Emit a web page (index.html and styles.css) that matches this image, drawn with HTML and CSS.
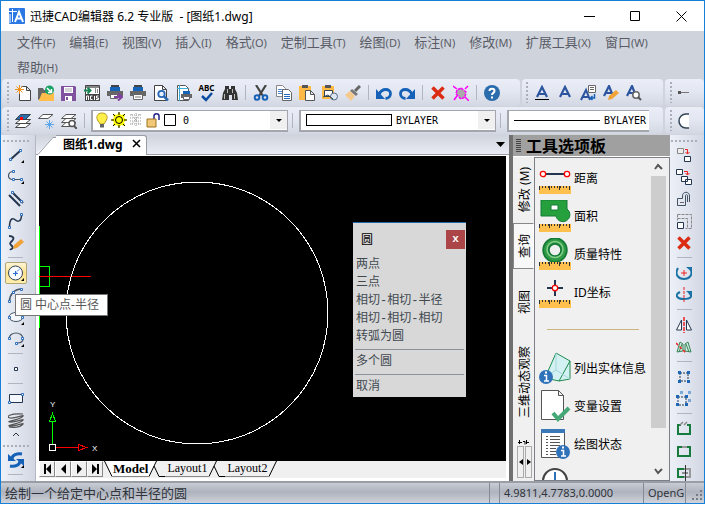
FILE: index.html
```html
<!DOCTYPE html>
<html lang="zh-CN">
<head>
  <meta charset="utf-8">
  <title>迅捷CAD编辑器 6.2 专业版</title>
  <meta name="viewport" content="width=device-width, initial-scale=1.0">
  <link rel="stylesheet" href="styles.css">
</head>
<body>
<div class="app">
  <header class="titlebar">
    <svg class="logo" width="16" height="16" viewBox="0 0 16 16"><rect width="16" height="16" rx="1" fill="#2b78e4"/><path d="M0 3.500h8M3.500 1v13M1 6v9" stroke="#fff" fill="none"/><path d="M6 14l4-10 4 10M7.500 10.500h5" stroke="#fff" stroke-width="2" fill="none"/></svg>
    <h1>迅捷CAD编辑器 6.2 专业版&nbsp; - [图纸1.dwg]</h1>
    <div class="win-btns">
      <button aria-label="最小化"><svg width="11" height="11"><path d="M0 5.500h11" stroke="#000"/></svg></button>
      <button aria-label="最大化"><svg width="11" height="11"><path d="M.5.5h9v9h-9z" stroke="#000" fill="none"/></svg></button>
      <button aria-label="关闭"><svg width="11" height="11"><path d="M.5.5l10 10M10.500.5l-10 10" stroke="#000" fill="none"/></svg></button>
    </div>
  </header>

  <nav class="menu">
    <button>文件<small>(F)</small></button>
    <button>编辑<small>(E)</small></button>
    <button>视图<small>(V)</small></button>
    <button>插入<small>(I)</small></button>
    <button>格式<small>(O)</small></button>
    <button>定制工具<small>(T)</small></button>
    <button>绘图<small>(D)</small></button>
    <button>标注<small>(N)</small></button>
    <button>修改<small>(M)</small></button>
    <button>扩展工具<small>(X)</small></button>
    <button>窗口<small>(W)</small></button>
    <button>帮助<small>(H)</small></button>
  </nav>

  <!-- standard toolbar -->
  <div class="bars">
    <div class="bar bar-main">
      <i class="grip"></i>
      <button aria-label="新建"><svg viewBox="0 0 16 16"><path d="M6.500 1.500h5l4 4v10h-11v-8M11.500 1.500v4h4" fill="#fff" stroke="#444"/><path d="M4.500 0v9M0 4.500h9M1.500 1.500l6 6M7.500 1.500l-6 6" stroke="#f0921e"/></svg></button>
      <button aria-label="打开"><svg viewBox="0 0 16 16"><path d="M0 15V3h5l1 2h4v4" fill="#666"/><path d="M1 15l3-7h12v8H1z" fill="#ffbd4a"/><circle cx="11.500" cy="5" r="4.500" fill="#1ba367"/><path d="M9 3l4 4M13.500 4v3.500H10" stroke="#fff" stroke-width="1.500" fill="none"/></svg></button>
      <button aria-label="保存"><svg viewBox="0 0 16 16"><path d="M0 1h14l1 1v14H0z" fill="#80519f"/><path d="M3 2h9v6H3zM4 11h7v5H4z" fill="#fff"/><path d="M4 4h7M4 6h7" stroke="#aaa"/><path d="M5 12h2v3H5z" fill="#80519f"/></svg></button>
      <button aria-label="导出"><svg viewBox="0 0 16 16"><path d="M1.500 15.500v-15h14v15z" fill="#fff" stroke="#444"/><path d="M2 1h13v2H2z" fill="#888"/><path d="M0 5.500h6M3.500 2.500l3 3-3 3" stroke="#178653" stroke-width="2" fill="none"/><path d="M11.500 3v5M13.500 4v4" stroke="#888"/><path d="M1 9h15v7H1z" fill="#444"/><path d="M2.500 15v-4h2v4M8.500 11h-2v3.500h2M10.500 11v4M14.500 11h-2v2h2v1.500h-2.500" stroke="#fff" fill="none"/></svg></button>
      <button aria-label="输出打印"><svg viewBox="0 0 16 16"><path d="M4 0h8v4H4z" fill="#444"/><path d="M3 2h10v4H3z" fill="#1664b8"/><path d="M0 6h16v5H0z" fill="#666"/><path d="M3.500 9.500h7v4h-7z" fill="#fff" stroke="#666"/><path d="M7 12h7M11 8.500l4 3.500-4 3.500" stroke="#80409f" stroke-width="2" fill="none"/></svg></button>
      <button aria-label="打印"><svg viewBox="0 0 16 16"><path d="M4 0h8v4H4z" fill="#444"/><path d="M3 2h10v4H3z" fill="#1664b8"/><path d="M0 6h16v5H0z" fill="#666"/><path d="M3.500 9.500h9v5h-9z" fill="#fff" stroke="#666"/><path d="M5 12h6" stroke="#777"/></svg></button>
      <button aria-label="打印预览"><svg viewBox="0 0 16 16"><path d="M1.500.5h8l4 4v11h-12zM9.500.5v4h4" fill="#fff" stroke="#444"/><circle cx="8.500" cy="9" r="3.200" fill="#e8f2ff" stroke="#2967b5" stroke-width="1.800"/><path d="M11 11.500l4 4" stroke="#2967b5" stroke-width="2.500"/></svg></button>
      <button aria-label="页面设置"><svg viewBox="0 0 16 16"><path d="M1.500.5h8l3 3v12h-11z" fill="#fff" stroke="#555"/><path d="M3.500 0v16M1 3.500h11" stroke="#3dadd6"/><path d="M7 6h7v3H7z" fill="#1664b8"/><path d="M5 9h11v4H5z" fill="#666"/><path d="M7.500 11.500h6v3h-6z" fill="#fff" stroke="#666"/></svg></button>
      <button class="spell" aria-label="拼写检查"><span class="abc">ABC</span><svg viewBox="0 0 16 10"><path d="M3 4l4 4 6-7" fill="none" stroke="#0c4da2" stroke-width="2.500"/></svg></button>
      <button aria-label="查找"><svg viewBox="0 0 16 16"><path d="M3 1h4v3h2V1h4v3l2 4 1 7h-6v-5H7v5H0l1-7 2-4z" fill="#333"/><path d="M2.500 9v5M12.500 9v5M5.500 4v4M10.500 4v4" stroke="#bbb"/></svg></button>
      <i class="sep"></i>
      <button aria-label="剪切"><svg viewBox="0 0 16 16"><path d="M3 0l7 11M13 0L6 11" stroke="#444" stroke-width="2.200"/><circle cx="4" cy="12.500" r="2.300" fill="none" stroke="#1561b8" stroke-width="2"/><circle cx="12" cy="12.500" r="2.300" fill="none" stroke="#1561b8" stroke-width="2"/></svg></button>
      <button aria-label="复制"><svg viewBox="0 0 16 16"><path d="M.5.5h6l3 3v8h-9z" fill="#fff" stroke="#888"/><path d="M2 4.500h5M2 6.500h5M2 8.500h5" stroke="#4a87ce"/><path d="M6.500 4.500h6l3 3v8h-9z" fill="#fff" stroke="#666"/><path d="M8 9.500h6M8 11.500h6M8 13.500h6" stroke="#2168bd"/></svg></button>
      <button aria-label="粘贴"><svg viewBox="0 0 16 16"><path d="M0 1h12v14H0z" fill="#ffba45"/><path d="M3 0h6v3H3z" fill="#555"/><path d="M6.500 5.500h5l4 4v6h-9zM11.500 5.500v4h4" fill="#fff" stroke="#555"/></svg></button>
      <button aria-label="粘贴为块"><svg viewBox="0 0 16 16"><path d="M0 1h12v13H0z" fill="#ffba45"/><path d="M3 0h6v3H3z" fill="#555"/><path d="M2.500 5.500h8v6h-8z" fill="#fff" stroke="#345"/><circle cx="12" cy="11.500" r="3.500" fill="#dce6f1" stroke="#556b86"/><path d="M1 12l5-2 5 4" fill="none" stroke="#345"/></svg></button>
      <button aria-label="特性匹配"><svg viewBox="0 0 16 16"><path d="M15 1l-5 5" stroke="#666" stroke-width="3"/><path d="M7 4l6 5-2 2-6-5z" fill="#777"/><path d="M5 6l5 5-4 5-6-6z" fill="#f4c98b"/></svg></button>
      <i class="sep"></i>
      <button aria-label="撤消"><svg viewBox="0 0 16 16"><path d="M3 9.500c3-7 11.500-6 11.500-1 0 3-2 5-5 5" fill="none" stroke="#1561b8" stroke-width="2.800"/><path d="M0 4v10h9z" fill="#1561b8"/></svg></button>
      <button aria-label="重做"><svg viewBox="0 0 16 16"><path d="M13 9.500C10 2.500 1.500 3.500 1.500 8.500c0 3 2 5 5 5" fill="none" stroke="#1561b8" stroke-width="2.800"/><path d="M16 4v10H7z" fill="#1561b8"/></svg></button>
      <i class="sep"></i>
      <button aria-label="删除"><svg viewBox="0 0 16 16"><path d="M2.500 2.500l11 11M13.500 2.500l-11 11" stroke="#db2b12" stroke-width="3.500"/></svg></button>
      <button aria-label="清理"><svg viewBox="0 0 16 16"><path d="M8 3l5 4-1 5-4 2-5-5 1-4z" fill="#aaa" stroke="#f0f" stroke-width="1.500" stroke-dasharray="3 1"/><path d="M0 1l4 3M15 1l-3 3M1 15l3-4M12 12l4 4" stroke="#f0f" stroke-width="1.500"/></svg></button>
      <i class="sep"></i>
      <button aria-label="帮助"><svg viewBox="0 0 16 16"><circle cx="8" cy="8" r="8" fill="#2a6cac"/><path d="M5.500 6c0-3 5-3 5 0 0 2-2.500 1.800-2.500 4M8 11.500v2" fill="none" stroke="#fff" stroke-width="2"/></svg></button>
    </div>
    <div class="bar bar-text">
      <i class="grip"></i>
      <button aria-label="多行文字"><svg viewBox="0 0 16 16"><path d="M3 12L8 2l5 10M5 9h6" fill="none" stroke="#2d559f" stroke-width="2.200"/><path d="M1 14.500h14" stroke="#000"/></svg></button>
      <button aria-label="单行文字"><svg viewBox="0 0 16 16"><path d="M3 12L8 2l5 10M5 9h6" fill="none" stroke="#2d559f" stroke-width="2.200"/></svg></button>
      <button aria-label="文字样式"><svg viewBox="0 0 16 16"><path d="M1 15L6 5l4 10M3 12h6" fill="none" stroke="#2d559f" stroke-width="2"/><path d="M8.500.5h7v7h-7z" fill="#fff" stroke="#666"/><path d="M10 2.500h4M10 4.500h4" stroke="#666"/><path d="M14.500 9v4H11M12.500 11l-2 2 2 2" fill="none" stroke="#1561b8" stroke-width="1.500"/></svg></button>
      <button aria-label="编辑文字"><svg viewBox="0 0 16 16"><path d="M1 11L6 1l4 10M3 8h6" fill="none" stroke="#2d559f" stroke-width="2.200"/><path d="M5 15l1-4 7-6 3 3-7 6z" fill="#f1a33a"/></svg></button>
      <button aria-label="查找文字"><svg viewBox="0 0 16 16"><path d="M1 11L6 1l4 10M3 8h6" fill="none" stroke="#2d559f" stroke-width="2.200"/><circle cx="10" cy="10" r="3.200" fill="#fff" stroke="#666" stroke-width="1.500"/><path d="M12 12l3 3" stroke="#555" stroke-width="2"/></svg></button>
    </div>
    <div class="bar bar-end">
      <i class="grip"></i>
      <svg width="11" height="16"><path d="M1 7.500h10" stroke="#777"/><path d="M0 6h3v3H0z" fill="#555"/></svg>
    </div>
  </div>

  <!-- layers and line properties -->
  <div class="bars">
    <div class="bar bar-props">
      <i class="grip"></i>
      <button aria-label="图层"><svg viewBox="0 0 16 16"><path d="M5.500 10.500h10l-5 4H.5z" fill="#fff" stroke="#444"/><path d="M5.500 6.500h10l-5 4H.5z" fill="#fff" stroke="#444"/><path d="M5.500 1.500h10l-5 5H.5z" fill="#2a6cac" stroke="#345"/><path d="M5 4h3v3H5z" fill="#f00"/></svg></button>
      <button aria-label="冻结图层"><svg viewBox="0 0 16 16"><path d="M5 1.500h10l-5 4H.5z" fill="#fff" stroke="#555"/><path d="M11.500 7v9M7 11.500h9M8.500 8.500l6 6M14.500 8.500l-6 6" stroke="#5ba5e8"/></svg></button>
      <button aria-label="图层浏览"><svg viewBox="0 0 16 16"><path d="M5 9.500h10l-5 4H.5z" fill="#fff" stroke="#555"/><path d="M5 5.500h10l-5 4H.5z" fill="#fff" stroke="#555"/><path d="M5 1.500h10l-5 4H.5z" fill="#fff" stroke="#555"/><circle cx="11" cy="10.500" r="3" fill="#fff" stroke="#555" stroke-width="1.500"/><path d="M13 13l3 3" stroke="#555" stroke-width="2"/></svg></button>
      <i class="sep"></i>
      <div class="combo">
        <svg class="opt" viewBox="0 0 16 16"><path d="M8 1c-5 0-6 4-4.500 7l2.500 4h4l2.500-4c1.500-3 .5-7-4.500-7z" fill="#ffef4b" stroke="#b59a25"/><path d="M6 12h4v3.500H6z" fill="#666"/></svg>
        <svg class="opt" viewBox="0 0 16 16"><path d="M8 0l2 3 4-1-1 4 3 2-3 2 1 4-4-1-2 3-2-3-4 1 1-4-3-2 3-2-1-4 4 1z" fill="#ff0"/><path d="M8 0v3M8 13v3M0 8h3M13 8h3M2 2l2 2M12 12l2 2M14 2l-2 2M4 12l-2 2" stroke="#000"/><circle cx="8" cy="8" r="3.500" fill="#ff0" stroke="#000"/></svg>
        <svg class="opt" viewBox="0 0 16 16"><path d="M2 3h12M2 6h12M2 9h12M2 12h12" stroke="#999" stroke-dasharray="1 1"/><path d="M3 2l9 11M12 2L3 13M8 1v14" stroke="#999" stroke-dasharray="1 1"/></svg>
        <svg class="opt" viewBox="0 0 16 16"><path d="M9 7V4c0-3 5-3 5 0v4" fill="none" stroke="#23238a" stroke-width="1.500"/><path d="M2 7h9v8H2z" fill="#f0c877" stroke="#9f7223"/></svg>
        <svg class="opt" viewBox="0 0 16 16"><path d="M2.500 2.500h11v11h-11z" fill="#fff" stroke="#000"/></svg>
        <select aria-label="当前图层"><option>0</option></select>
        <svg class="arrow" viewBox="0 0 17 18"><path d="M6 8h6l-3 3z" fill="#000"/></svg>
      </div>
      <i class="sep"></i>
      <div class="combo combo-color">
        <i class="swatch"></i>
        <select aria-label="颜色"><option>BYLAYER</option></select>
        <svg class="arrow" viewBox="0 0 17 18"><path d="M6 8h6l-3 3z" fill="#000"/></svg>
      </div>
      <i class="sep"></i>
      <div class="combo combo-line">
        <i class="line"></i>
        <select aria-label="线型"><option>BYLAYER</option></select>
      </div>
    </div>
    <div class="bar bar-end">
      <i class="grip"></i>
      <svg width="11" height="16"><path d="M11 1H8a7 7 0 0 0 0 14h3" fill="#fff"/><path d="M11 1H8a7 7 0 0 0 0 14h3" fill="none" stroke="#345" stroke-width="1.500"/></svg>
    </div>
  </div>

  <main class="work">
    <aside class="tools">
      <i class="grip-h"></i>
      <button aria-label="直线"><svg viewBox="0 0 16 16"><path d="M2.500 12.500l10-9" stroke="#24364f" stroke-width="2"/><path class="node" d="M1.500 11.500h2v2h-2zM11.500 2.500h2v2h-2z"/><path d="M16 13v3h-3z"/></svg></button>
      <button aria-label="多段线"><svg viewBox="0 0 16 16"><path d="M5 2.500C-1 3-1 11 5 10.500h8" fill="none" stroke="#456" stroke-width="1.200"/><path class="node" d="M4.500 1.500h2v2h-2zM4.500 9.500h2v2h-2zM12.500 9.500h2v2h-2z"/><path d="M16 12v3h-3z"/></svg></button>
      <button aria-label="多线"><svg viewBox="0 0 16 16"><path d="M4 1l11 11M1 4l11 11" stroke="#24364f" stroke-width="2"/><path class="node" d="M3.500.5h2v2h-2zM12.500 9.500h2v2h-2z"/></svg></button>
      <button aria-label="样条曲线"><svg viewBox="0 0 16 16"><path d="M1.500 14c0-10 4-9 6-7s6 2 6-5" fill="none" stroke="#24364f" stroke-width="1.500"/><path class="node" d="M.5 13.500h2v2h-2zM12.500.5h2v2h-2z"/></svg></button>
      <button aria-label="徒手画"><svg viewBox="0 0 16 16"><path d="M1 1c4 0 6 2 3 5s-2 3 0 5-1 4-2 3" fill="none" stroke="#24364f" stroke-width="1.800"/><path d="M5 14l1-4 7-6 3 3-7 6z" fill="#f1a33a"/></svg></button>
      <i class="sep-h"></i>
      <button class="active" aria-label="圆 中心点-半径"><svg viewBox="0 0 16 16"><circle cx="7.500" cy="8" r="7" fill="#f8fbff" stroke="#345"/><path d="M7.500 8l5-5" stroke="#2a6cd0" stroke-dasharray="2 1"/><path d="M5 8.500h5M7.500 6v5" stroke="#2a6cd0"/><path d="M16 13v3h-3z"/></svg></button>
      <button aria-label="圆弧"><svg viewBox="0 0 16 16"><path d="M1.500 14C1.500 8 6 2 13.500 2" fill="none" stroke="#456" stroke-width="1.500"/><path class="node" d="M.5 13.500h2v2h-2zM4.500 4.500h2v2h-2zM12.500 1.500h2v2h-2z"/></svg></button>
      <button aria-label="椭圆"><svg viewBox="0 0 16 16"><ellipse cx="8" cy="8" rx="7" ry="4.500" fill="#f4f8fe" stroke="#456"/><path class="node" d="M.5 7.500h2v2h-2zM13.500 7.500h2v2h-2z"/><path d="M16 13v3h-3z"/></svg></button>
      <button aria-label="椭圆弧"><svg viewBox="0 0 16 16"><path d="M1 8c0-8 14-8 14 0 0 3-3 4-6 4" fill="none" stroke="#456" stroke-width="1.200"/><path class="node" d="M.5 6.500h2v2h-2zM7.500 11.500h2v2h-2zM13.500 6.500h2v2h-2z"/><path d="M16 13v3h-3z"/></svg></button>
      <i class="sep-h"></i>
      <button aria-label="点"><svg viewBox="0 0 16 16"><path d="M6.500 6.500h3v3h-3z" fill="#fff" stroke="#24364f"/></svg></button>
      <i class="sep-h"></i>
      <button aria-label="矩形"><svg viewBox="0 0 16 16"><path d="M1.500 3.500h13v8h-13z" fill="#f4f8fe" stroke="#24364f"/><path class="node" d="M.5 10.500h2v2h-2zM13.500 2.500h2v2h-2z"/></svg></button>
      <button aria-label="螺旋"><svg viewBox="0 0 16 16"><path d="M15 1C2 0-3 4 2 5s17-5 12-1S-3 8 2 9s17-5 12-1-17 4-12 5 17-5 12-1c-2 2-8 3-13 2" fill="none" stroke="#555" stroke-width="1.200"/></svg></button>
      <i class="more"><svg width="8" height="5"><path d="M1 4l3-3 3 3" fill="none" stroke="#333"/></svg></i>
      <i class="grip-h"></i>
      <button aria-label="重生成"><svg viewBox="0 0 16 16"><path d="M14 2C9 1 4 3 4 7M2 14c5 1 10-1 10-5" fill="none" stroke="#1561b8" stroke-width="3"/><path d="M0 2v7h8zM16 14V7H8z" fill="#1561b8"/><path d="M16 13v3h-3z"/></svg></button>
      <i class="sep-h"></i>
    </aside>
    <div class="tooltip">圆 中心点-半径</div>

    <section class="doc">
      <div class="doc-tabs">
        <svg class="slope" width="20" height="18"><path d="M0 18L16 1h4v17z" fill="#fff"/><path d="M0 17.500h2L17 .5h3" fill="none" stroke="#999da6"/></svg>
        <div class="doc-tab">图纸1.dwg <button aria-label="关闭图纸"><svg width="9" height="9"><path d="M1 1l7 7M8 1L1 8" stroke="#000" stroke-width="1.500"/></svg></button></div>
        <button class="doc-list" aria-label="图纸列表"><svg width="9" height="5"><path d="M0 0h9L4.500 5z"/></svg></button>
      </div>
      <div class="canvas">
        <svg width="467" height="305" shape-rendering="crispEdges">
          <path d="M.5 70v102M0 110.500h10.500v20H0" stroke="#0f0" fill="none"/>
          <path d="M0 120.500h52" stroke="#f00"/>
          <circle cx="158" cy="157" r="131" fill="none" stroke="#fff"/>
          <path d="M13.500 288v-23M10.500 265.500h6l-3-8z" stroke="#0f0" fill="none"/>
          <path d="M17 291.500h22M39.500 288.500v6l8-3z" stroke="#f00" fill="none"/>
          <path d="M10.500 288.500h6v6h-6z" stroke="#fff" fill="none"/>
          <text x="11" y="251">Y</text>
          <text x="53" y="295">X</text>
        </svg>
        <div class="popup">
          <div class="popup-head">圆<button aria-label="关闭">x</button></div>
          <button>两点</button>
          <button>三点</button>
          <button>相切-相切-半径</button>
          <button>相切-相切-相切</button>
          <button>转弧为圆</button>
          <hr>
          <button>多个圆</button>
          <hr>
          <button>取消</button>
        </div>
      </div>
      <div class="layouts">
        <button class="nav" aria-label="首页"><svg width="9" height="10"><path d="M1 0h2v10H1zM8 0v10L3 5z"/></svg></button>
        <button class="nav" aria-label="上一页"><svg width="9" height="10"><path d="M7 0v10L2 5z"/></svg></button>
        <button class="nav" aria-label="下一页"><svg width="9" height="10"><path d="M2 0v10l5-5z"/></svg></button>
        <button class="nav" aria-label="末页"><svg width="9" height="10"><path d="M1 0v10l5-5zM6 0h2v10H6z"/></svg></button>
        <svg class="cut" width="9" height="16"><path d="M1 0h8v16z" fill="#fff"/><path d="M1.500 0L9 15.500" stroke="#000"/></svg>
        <button class="layout current">Model</button>
        <svg class="cut" width="16" height="16"><path d="M0 0h8L0 16z" fill="#fff"/><path d="M0 15.500L7.500 0M5 5l5 10.500h6" fill="none" stroke="#000"/></svg>
        <button class="layout">Layout1</button>
        <svg class="cut" width="16" height="16"><path d="M0 15.500L7.500 0M5 5l5 10.500h6" fill="none" stroke="#000"/></svg>
        <button class="layout">Layout2</button>
        <svg class="cut" width="8" height="16"><path d="M0 15.500L7.500 0" stroke="#000"/></svg>
      </div>
    </section>

    <aside class="palette">
      <h2><i class="grip-dark"></i>工具选项板</h2>
      <div class="palette-body">
        <div class="vtabs">
          <button class="vtab"><span>修改 (M)</span></button>
          <button class="vtab on"><span>查询</span></button>
          <button class="vtab"><span>视图</span></button>
          <button class="vtab long"><span>三维动态观察</span></button>
          <svg class="rest" width="11" height="5"><path d="M1.500 0v4M0 2.500h4M5 1.500h2v3M8.500 0v4M8 2.500h3" fill="none" stroke="#000"/></svg>
          <div class="vnav">
            <button aria-label="向左"><svg width="4" height="6"><path d="M4 0v6L0 3z"/></svg></button>
            <button aria-label="向右"><svg width="4" height="6"><path d="M0 0v6l4-3z"/></svg></button>
          </div>
        </div>
        <div class="list">
          <button class="item"><svg viewBox="0 0 32 32"><path d="M4 12h24" stroke="#24364f" stroke-width="2"/><circle cx="4" cy="12" r="2.700" fill="#fff" stroke="#f00" stroke-width="1.300"/><circle cx="28" cy="12" r="2.700" fill="#fff" stroke="#f00" stroke-width="1.300"/><path class="rule" d="M0 24h32v8H0z"/><path class="ticks" d="M0 26h32"/><path class="ticks-l" d="M0 25h32"/></svg>距离</button>
          <button class="item"><svg viewBox="0 0 32 32"><path d="M2 0h26v9a7 7 0 1 1-11 7H2z" fill="#26a03d" stroke="#147a36"/><path d="M12 5h7v5h-7z" fill="#fff" stroke="#147a36"/><path class="rule" d="M0 24h32v8H0z"/><path class="ticks" d="M0 26h32"/><path class="ticks-l" d="M0 25h32"/></svg>面积</button>
          <button class="item"><svg viewBox="0 0 32 32"><circle cx="16" cy="12" r="9" fill="none" stroke="#147a36" stroke-width="7.500"/><circle cx="16" cy="12" r="9" fill="none" stroke="#2f9b47" stroke-width="4"/><circle cx="16" cy="11.500" r="8" fill="none" stroke="#86cf8a" stroke-width="1.500"/><path class="rule" d="M0 24h32v8H0z"/><path class="ticks" d="M0 26h32"/><path class="ticks-l" d="M0 25h32"/></svg>质量特性</button>
          <button class="item"><svg viewBox="0 0 32 32"><path d="M16 4v16M8 12h16" stroke="#24364f" stroke-width="2"/><circle cx="16" cy="12" r="2.700" fill="#fff" stroke="#f00" stroke-width="1.300"/><path class="rule" d="M0 24h32v8H0z"/><path class="ticks" d="M0 26h32"/><path class="ticks-l" d="M0 25h32"/></svg>ID坐标</button>
          <hr>
          <button class="item"><svg viewBox="0 0 32 32"><path d="M17 1l14 8v18l-11 2L6 26z" fill="#d3f0f2" stroke="#1c8b4c" stroke-linejoin="round"/><path d="M31 9L20 29" stroke="#1c8b4c"/><path d="M17 1v17L6 26M17 18l14 9" fill="none" stroke="#a5d6d8"/><circle cx="7" cy="25" r="7" fill="#2f72b9"/><path d="M5 23.500h2.500V29M5 29h5" fill="none" stroke="#fff" stroke-width="1.500"/><path d="M6 19.500h2v2H6z" fill="#fff"/></svg>列出实体信息</button>
          <button class="item"><svg viewBox="0 0 32 32"><path d="M2.500.5h17l5 5v24h-22zM19.500.5v5h5" fill="#fff" stroke="#555"/><path d="M14 23l5 6L30 18" fill="none" stroke="#44a877" stroke-width="4"/></svg>变量设置</button>
          <button class="item"><svg viewBox="0 0 32 32"><path d="M2.500 1.500h23v28h-23z" fill="#fff" stroke="#555"/><path d="M2 1h24v4H2z" fill="#3a78b8"/><path d="M7 8.500h2M11 8.500h10M7 11.500h2M11 11.500h10M7 14.500h2M11 14.500h10M7 17.500h2M11 17.500h10M7 20.500h2M11 20.500h6M7 23.500h2M11 23.500h6M7 26.500h2M11 26.500h6" stroke="#555"/><circle cx="24" cy="24" r="7" fill="#2f72b9"/><path d="M22 22.500h2.500V28M22 28h5" fill="none" stroke="#fff" stroke-width="1.500"/><path d="M23 18.500h2v2h-2z" fill="#fff"/></svg>绘图状态</button>
          <button class="item"><svg viewBox="0 0 32 32"><circle cx="16" cy="15" r="12" fill="#fff" stroke="#444" stroke-width="2"/><path d="M16 6v9" stroke="#2f72b9" stroke-width="2"/></svg></button>
        </div>
        <div class="scroll">
          <svg width="15" height="18"><path d="M4 11l3-4 4 4" fill="none" stroke="#555" stroke-width="2"/></svg>
          <i class="thumb"></i>
          <svg width="15" height="18"><path d="M4 7l3 4 4-4" fill="none" stroke="#555" stroke-width="2"/></svg>
        </div>
      </div>
    </aside>

    <aside class="tools tools-right">
      <i class="grip-h"></i>
      <button aria-label="复制对象"><svg viewBox="0 0 16 16"><path d="M1.500 1.500h6v5h-6z" fill="#eee" stroke="#888"/><path d="M8.500 9.500h6v5h-6z" fill="#fff" stroke="#24364f"/><path d="M9 2.500h2.500V7M9.500 5l2 2 2-2" fill="none" stroke="#e22"/></svg></button>
      <button aria-label="多重复制"><svg viewBox="0 0 16 16"><path d="M.5.5h6v5h-6zM5.500 7.500h6v5h-6zM9.500 10.500h6v5h-6z" fill="#fff" stroke="#24364f"/><path d="M8 2.500h3.500V6M9.500 4l2 2 2-2" fill="none" stroke="#e22"/></svg></button>
      <button aria-label="偏移"><svg viewBox="0 0 16 16"><path d="M1.500 14.500v-7h5V5c0-5 7-5 7 0v6M1.500 14.500h8V5c0-2 2-2 2 0v6" fill="none" stroke="#445266"/><path d="M4 11.500h4" stroke="#667"/></svg></button>
      <button aria-label="阵列"><svg viewBox="0 0 16 16"><path d="M1.500 1.500h14v14h-6M1.500 1.500v6M1.500 5.500h10v10" fill="none" stroke="#888" stroke-dasharray="3 1"/><path d="M1.500 9.500h6v6h-6z" fill="#fff" stroke="#24364f"/></svg></button>
      <button aria-label="删除对象"><svg viewBox="0 0 16 16"><path d="M2.500 2.500l11 11M13.500 2.500l-11 11" stroke="#db2b12" stroke-width="3.500"/></svg></button>
      <i class="sep-h"></i>
      <button aria-label="旋转"><svg viewBox="0 0 16 16"><path d="M2 3c-4 7 1 11 6 11s10-4 6-11" fill="none" stroke="#1b72a5" stroke-width="2"/><path d="M10 2h6v5z" fill="#1b72a5"/><path d="M8 5v6M5 8h6" stroke="#e22"/></svg></button>
      <button aria-label="三维旋转"><svg viewBox="0 0 16 16"><path d="M4 5C-2 8 1 12 8 12s9-3 5-6" fill="none" stroke="#1b72a5" stroke-width="2"/><path d="M10 4h6v5z" fill="#1b72a5"/><path d="M8 0v16" stroke="#e22" stroke-dasharray="3 1"/></svg></button>
      <i class="sep-h"></i>
      <button aria-label="镜像"><svg viewBox="0 0 16 16"><path d="M5.500 3v10h-5zM10.500 3v10h5z" fill="#fff" stroke="#24364f"/><path d="M8 0v16" stroke="#e22" stroke-width="1.500" stroke-dasharray="4 1"/></svg></button>
      <button aria-label="三维镜像"><svg viewBox="0 0 16 16"><path d="M1 13L4 3l3 2v7zM15 13L12 3 9 5v7z" fill="#cfe9dc" stroke="#388558"/><path d="M3 13l3-8M13 13l-3-8" stroke="#388558"/><path d="M0 4l10 10" stroke="#e22" stroke-width="1.500" stroke-dasharray="3 2"/></svg></button>
      <i class="sep-h"></i>
      <button aria-label="编组"><svg viewBox="0 0 16 16"><path d="M4 4h8v8H4z" fill="none" stroke="#24364f" stroke-dasharray="2 1"/><path d="M2 2h3v3H2zM11 2h3v3h-3zM2 11h3v3H2zM11 11h3v3h-3z" fill="#1c66b7"/></svg></button>
      <button aria-label="选择编组"><svg viewBox="0 0 16 16"><path d="M4 0h3v3H4zM12 0h3v3h-3zM12 8h3v3h-3z" fill="#7ba8d8"/><path d="M2 6h8v8H2z" fill="#e8eef7" stroke="#24364f" stroke-dasharray="2 1"/><path d="M0 4h3v3H0zM9 4h3v3H9zM0 12h3v3H0zM9 12h3v3H9z" fill="#1c66b7"/></svg></button>
      <i class="sep-h"></i>
      <button aria-label="打断"><svg viewBox="0 0 16 16"><path d="M5 4H2v9h12V4h-3" fill="none" stroke="#177b3d" stroke-width="2"/><path d="M4 4l3-3M8 4l3-3" stroke="#888" stroke-width="1.500"/></svg></button>
      <button aria-label="合并"><svg viewBox="0 0 16 16"><path d="M2 4h12v9H2z" fill="none" stroke="#177b3d" stroke-width="2"/><path d="M6 3h5v2H6z" fill="#999"/></svg></button>
      <button aria-label="修剪"><svg viewBox="0 0 16 16"><path d="M8 4h6v8H8" fill="none" stroke="#999" stroke-width="2"/><path d="M8 4H2v8h6" fill="none" stroke="#177b3d" stroke-width="2"/><path d="M9.500 0v16M6 8h6" stroke="#333"/></svg></button>
    </aside>
  </main>

  <footer class="status">
    <span class="hint">绘制一个给定中心点和半径的圆</span>
    <span class="gap"></span>
    <span class="coords">4.9811,4.7783,0.0000</span>
    <span class="engine">OpenG</span>
    <svg class="resize" width="12" height="12"><path d="M9 1h2v2H9zM5 5h2v2H5zM9 5h2v2H9zM1 9h2v2H1zM5 9h2v2H5zM9 9h2v2H9z" fill="#777c86"/></svg>
  </footer>
</div>
</body>
</html>
```
FILE: styles.css
```css
* {
  box-sizing: border-box;
}

body {
  margin: 0;
  background: #fff;
  font-family: "Noto Sans", "Noto Sans CJK SC", sans-serif;
  font-size: 12px;
  color: #000;
}

button {
  padding: 0;
  border: none;
  background: none;
  font: inherit;
  color: inherit;
}

svg {
  display: block;
  flex: none;
}

.app {
  display: flex;
  flex-direction: column;
  height: calc(100vh - 1px);
  border: 1px solid #1680d9;
  background: #cfd3dc;
  overflow: hidden;
}

/* title bar */
.titlebar {
  display: flex;
  align-items: center;
  height: 30px;
  flex: none;
  padding-left: 8px;
  background: #fff;
}

.titlebar h1 {
  flex: 1;
  margin: 0 0 0 5px;
  font-size: 12px;
  font-weight: normal;
  white-space: nowrap;
}

.win-btns {
  display: flex;
}

.win-btns button {
  display: flex;
  align-items: center;
  justify-content: center;
  width: 46px;
  height: 28px;
}

/* menu */
.menu {
  display: flex;
  flex-wrap: wrap;
  flex: none;
  gap: 3px 14px;
  padding: 0 40px 1px 16px;
  color: #595c66;
  font-size: 13px;
}

.menu button {
  height: 22px;
  line-height: 22px;
  white-space: nowrap;
}

.menu small {
  font-size: 11px;
}

/* toolbars */
.bars {
  display: flex;
  flex: none;
  gap: 2px;
  height: 28px;
  padding-left: 1px;
}

.bar {
  display: flex;
  align-items: center;
  height: 27px;
  padding-left: 5px;
  border-radius: 4px;
  background: linear-gradient(#ebeef7, #e2e6f0 50%, #d2d7e3);
}

.bar-main {
  flex: 1;
}

.bar-text {
  width: 141px;
  padding-left: 4px;
}

.bar-props {
  flex: 1;
}

.bar-end {
  width: 39px;
}

.bar button {
  display: flex;
  align-items: center;
  justify-content: center;
  width: 23px;
  height: 23px;
}

.bar button svg,
.tools button svg {
  width: 16px;
  height: 16px;
}

.bar .spell {
  flex-direction: column;
}

.bar .spell svg {
  height: 10px;
}

.abc {
  font-size: 8px;
  font-weight: bold;
  line-height: 9px;
}

.grip {
  width: 2px;
  height: 21px;
  margin-right: 2px;
  background: repeating-linear-gradient(#a9aeb9 0 2px, transparent 2px 4px);
}

.bar-end .grip {
  margin-right: 6px;
}

.sep {
  flex: none;
  width: 8px;
  height: 15px;
  background: linear-gradient(#b0b5c0, #b0b5c0) 4px 0 / 1px 100% no-repeat;
}

.combo {
  display: flex;
  align-items: center;
  width: 197px;
  height: 22px;
  margin-left: 3px;
  padding-left: 1px;
  border: 2px solid #a3a6ad;
  border-width: 1px 1px 2px 2px;
  background: #fff;
}

.combo .opt {
  width: 16px;
  height: 16px;
  margin-right: 1px;
}

.combo select {
  flex: 1;
  min-width: 0;
  height: 18px;
  margin: 0;
  padding: 0 0 0 4px;
  border: none;
  background: none;
  font: 10px "DejaVu Sans Mono", monospace;
  color: #000;
  appearance: none;
}

.combo .arrow {
  width: 17px;
  height: 18px;
  background: #f0f0f0;
}

.combo-line {
  width: 142px;
  border-right: none;
}

.swatch {
  width: 86px;
  height: 12px;
  margin-left: 4px;
  border: 1px solid #000;
}

.line {
  width: 86px;
  height: 1px;
  margin-left: 4px;
  background: #000;
}

/* work area */
.work {
  position: relative;
  display: flex;
  flex: 1;
  min-height: 0;
}

.tools {
  display: flex;
  flex-direction: column;
  align-items: center;
  flex: none;
  width: 35px;
  padding-right: 5px;
  border-right: 1px solid #b4b8c2;
  background: linear-gradient(90deg, #edf0f7, #dfe4ee 50%, #d2d7e3);
  overflow: hidden;
}

.tools button {
  display: flex;
  align-items: center;
  justify-content: center;
  flex: none;
  width: 22px;
  height: 22px;
}

.tools .active {
  border: 1px solid #b3a475;
  border-radius: 2px;
  background: linear-gradient(#fff6d6, #ffe08a 50%, #fff0b0);
}

.tools .node {
  fill: #fff;
  stroke: #2c6fbd;
}

.tools-right {
  width: 34px;
  padding-right: 6px;
  border-right: none;
}

.grip-h {
  flex: none;
  width: 26px;
  height: 2px;
  margin: 5px 0 2px;
  background: repeating-linear-gradient(90deg, #a9aeb9 0 2px, transparent 2px 4px);
}

.sep-h {
  flex: none;
  width: 15px;
  height: 8px;
  background: linear-gradient(#b0b5c0, #b0b5c0) 0 3px / 100% 1px no-repeat;
}

.more {
  flex: none;
  height: 8px;
}

.tooltip {
  position: absolute;
  left: 14px;
  top: 159px;
  z-index: 2;
  height: 22px;
  padding: 0 8px 0 4px;
  border: 1px solid #767676;
  background: #fff;
  color: #575757;
  line-height: 20px;
  white-space: nowrap;
}

.doc {
  display: flex;
  flex-direction: column;
  flex: 1;
  min-width: 0;
  padding-left: 3px;
  background: #fff;
}

.doc-tabs {
  display: flex;
  flex: none;
  height: 20px;
  margin-left: -3px;
  border-bottom: 1px solid #999da6;
  background: linear-gradient(#cfd3dc, #e9ecf4);
}

.slope {
  margin-top: 2px;
}

.doc-tab {
  display: flex;
  align-items: center;
  gap: 9px;
  height: 20px;
  padding: 0 5px 4px 7px;
  border-top: 1px solid #999da6;
  border-right: 1px solid #999da6;
  border-radius: 0 3px 0 0;
  background: #fff;
  font-weight: bold;
  white-space: nowrap;
}

.doc-list {
  margin: 0 4px 0 auto;
}

.canvas {
  position: relative;
  flex: 1;
  min-height: 0;
  margin: 1px 3px 0 0;
  background: #000;
  overflow: hidden;
}

.canvas text {
  fill: #fff;
  font: 8px "Liberation Sans", sans-serif;
}

.popup {
  position: absolute;
  left: 314px;
  top: 66px;
  width: 113px;
  padding-bottom: 1px;
  border-top: 1px solid #1e68a8;
  background: #d8d8d8;
  color: #414950;
  font-family: "Liberation Mono", "Noto Sans CJK SC", monospace;
}

.popup button {
  display: block;
  width: 100%;
  height: 18px;
  padding-left: 3px;
  line-height: 18px;
  text-align: left;
  white-space: nowrap;
}

.popup-head {
  display: flex;
  align-items: center;
  justify-content: space-between;
  height: 33px;
  padding: 0 1px 1px 8px;
  color: #000;
}

.popup .popup-head button {
  width: 19px;
  height: 19px;
  padding: 0;
  background: #ab4547;
  color: #fff;
  font-size: 11px;
  font-weight: bold;
  text-align: center;
}

.popup hr {
  height: 1px;
  margin: 3px 2px;
  border: none;
  background: #8c9299;
}

.layouts {
  display: flex;
  flex: none;
  height: 20px;
  margin-right: 3px;
  border-bottom: 3px solid #fff;
  background: #f0f0f0;
  font-family: "Liberation Serif", serif;
}

.nav {
  display: flex;
  align-items: center;
  justify-content: center;
  width: 16px;
  height: 16px;
  border: 1px solid #fff;
  border-color: #fff #888 #888 #fff;
  background: #f0f0f0;
}

.layout {
  height: 16px;
  padding: 0 2px;
  border-bottom: 1px solid #888;
  font-size: 12px;
  line-height: 15px;
}

.current {
  padding: 0 1px;
  background: #fff;
  font-size: 13px;
  font-weight: bold;
}

/* tool palette */
.palette {
  display: flex;
  flex-direction: column;
  flex: none;
  width: 161px;
  border-left: 4px solid #707070;
  background: #f0f0f0;
}

.palette h2 {
  display: flex;
  align-items: center;
  gap: 5px;
  flex: none;
  height: 21px;
  margin: 0;
  padding-left: 3px;
  background: #a0a0a0;
  font-size: 16px;
  line-height: 20px;
}

.grip-dark {
  width: 5px;
  height: 14px;
  background: repeating-linear-gradient(#444 0 1px, transparent 1px 2px);
}

.palette-body {
  display: flex;
  flex: 1;
  min-height: 0;
  border-top: 1px solid #fff;
}

.vtabs {
  display: flex;
  flex-direction: column;
  width: 21px;
  overflow: hidden;
}

.vtab {
  display: flex;
  align-items: center;
  justify-content: center;
  flex: none;
  height: 66px;
}

.vtab span {
  writing-mode: vertical-rl;
  text-orientation: sideways;
  transform: rotate(180deg);
  white-space: nowrap;
}

.vtab.on {
  height: 46px;
  border: 1px solid #888;
  border-right-color: #fff;
  background: #f8f8f8;
}

.vtab.long {
  height: 94px;
}

.rest {
  margin: auto 0 1px 5px;
}

.vnav {
  display: flex;
  gap: 1px;
  flex: none;
  margin: 0 2px 3px 4px;
}

.vnav button {
  display: flex;
  align-items: center;
  justify-content: center;
  width: 7px;
  height: 32px;
  border: 1px solid #aaa;
}

.list {
  flex: 1;
  min-width: 0;
  padding: 1px 0 0 4px;
  border: 1px solid #7c7f86;
  border-right: none;
  overflow: hidden;
}

.item {
  display: flex;
  align-items: center;
  gap: 3px;
  width: 100%;
  height: 38px;
  white-space: nowrap;
}

.item svg {
  width: 32px;
  height: 32px;
}

.rule {
  fill: #ffc04d;
}

.ticks {
  stroke: #333;
  stroke-width: 4;
  stroke-dasharray: 1 9;
}

.ticks-l {
  stroke: #333;
  stroke-width: 2;
  stroke-dasharray: 1 2;
}

.list hr {
  width: 92px;
  height: 1px;
  margin: 18px 8px 19px;
  border: none;
  background: #cbb47e;
}

.scroll {
  display: flex;
  flex-direction: column;
  flex: none;
  width: 19px;
  border: 1px solid #7c7f86;
  border-left: none;
}

.thumb {
  width: 15px;
  height: 252px;
  background: #cdcdcd;
}

.scroll svg:last-child {
  margin-top: auto;
}

/* status bar */
.status {
  display: flex;
  align-items: center;
  flex: none;
  height: 22px;
  border-top: 2px solid #999da6;
  background: linear-gradient(#c8ccd3, #aeb3be 45%, #b7bbc5 60%, #d0d3da);
  color: #30343c;
  font-size: 11px;
  white-space: nowrap;
}

.hint {
  flex: 1;
  padding-left: 4px;
  font-size: 13px;
}

.status span {
  line-height: 20px;
}

.gap,
.coords,
.engine {
  height: 20px;
  border-left: 1px solid #858a96;
}

.gap {
  width: 10px;
}

.coords {
  width: 144px;
  padding-left: 4px;
}

.engine {
  width: 43px;
  padding-left: 4px;
  border-right: 1px solid #858a96;
  overflow: hidden;
}

.resize {
  margin: 4px 1px 0 5px;
}
```
